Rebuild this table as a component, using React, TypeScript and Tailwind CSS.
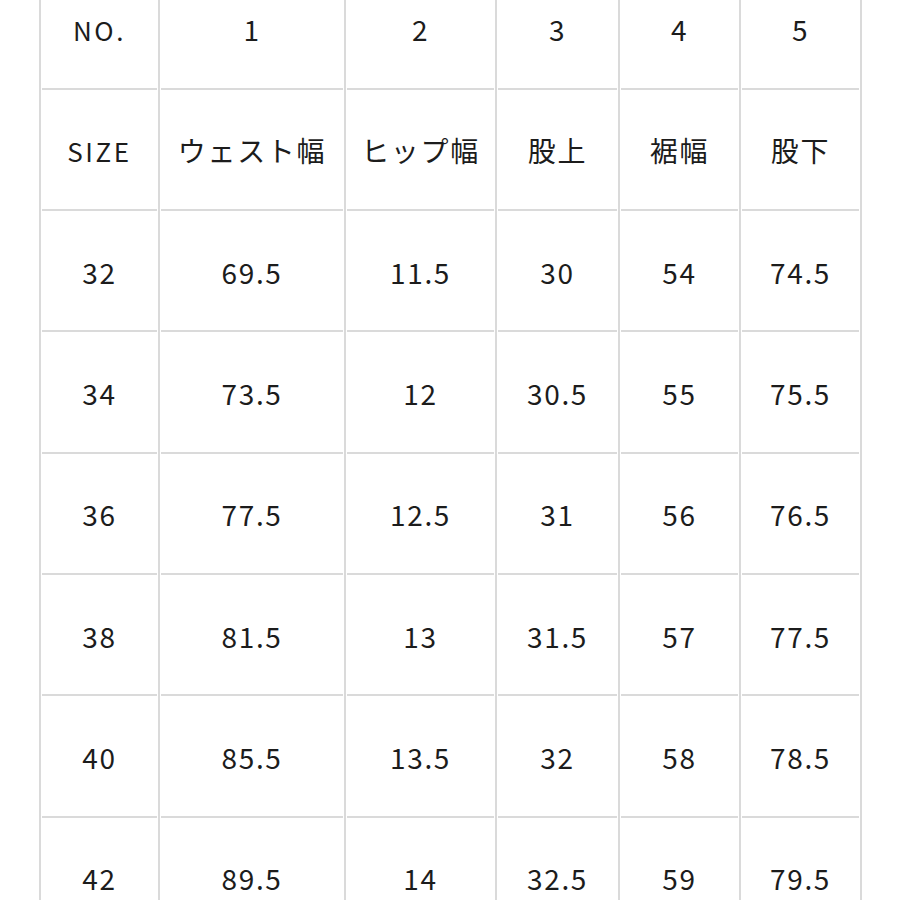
const header = ['NO.', '1', '2', '3', '4', '5'];
const labels = ['SIZE', 'ウェスト幅', 'ヒップ幅', '股上', '裾幅', '股下'];

const rows = [
  ['32', '69.5', '11.5', '30', '54', '74.5'],
  ['34', '73.5', '12', '30.5', '55', '75.5'],
  ['36', '77.5', '12.5', '31', '56', '76.5'],
  ['38', '81.5', '13', '31.5', '57', '77.5'],
  ['40', '85.5', '13.5', '32', '58', '78.5'],
  ['42', '89.5', '14', '32.5', '59', '79.5'],
];

function Cell({ text, col }: { text: string; col: number }) {
  const small = text === 'NO.' || text === 'SIZE';
  return (
    <div
      className={`flex h-[121.3px] flex-col border-l-2 border-[#dadada] ${
        col === 5 ? 'border-r-2' : ''
      }`}
    >
      <div
        className={`flex flex-1 items-center justify-center pt-[2px] text-[#1c1c1c] ${
          small ? 'text-[26px] tracking-[0.1em]' : 'text-[28px] tracking-[0.06em]'
        }`}
      >
        {text}
      </div>
      <div className="mx-[1px] h-[2px] bg-[#dadada]" />
    </div>
  );
}

export default function App() {
  const all = [header, labels, ...rows];
  return (
    <div
      className="h-[900px] w-[900px] overflow-hidden bg-white"
      style={{ fontFamily: '"Noto Sans CJK JP", "Noto Sans", sans-serif' }}
    >
      <div className="-mt-[31.5px] ml-[39px] grid w-[823px] grid-cols-[119px_186px_151px_123px_121px_123px]">
        {all.map((row, r) =>
          row.map((text, c) => <Cell key={`${r}-${c}`} text={text} col={c} />),
        )}
      </div>
    </div>
  );
}
